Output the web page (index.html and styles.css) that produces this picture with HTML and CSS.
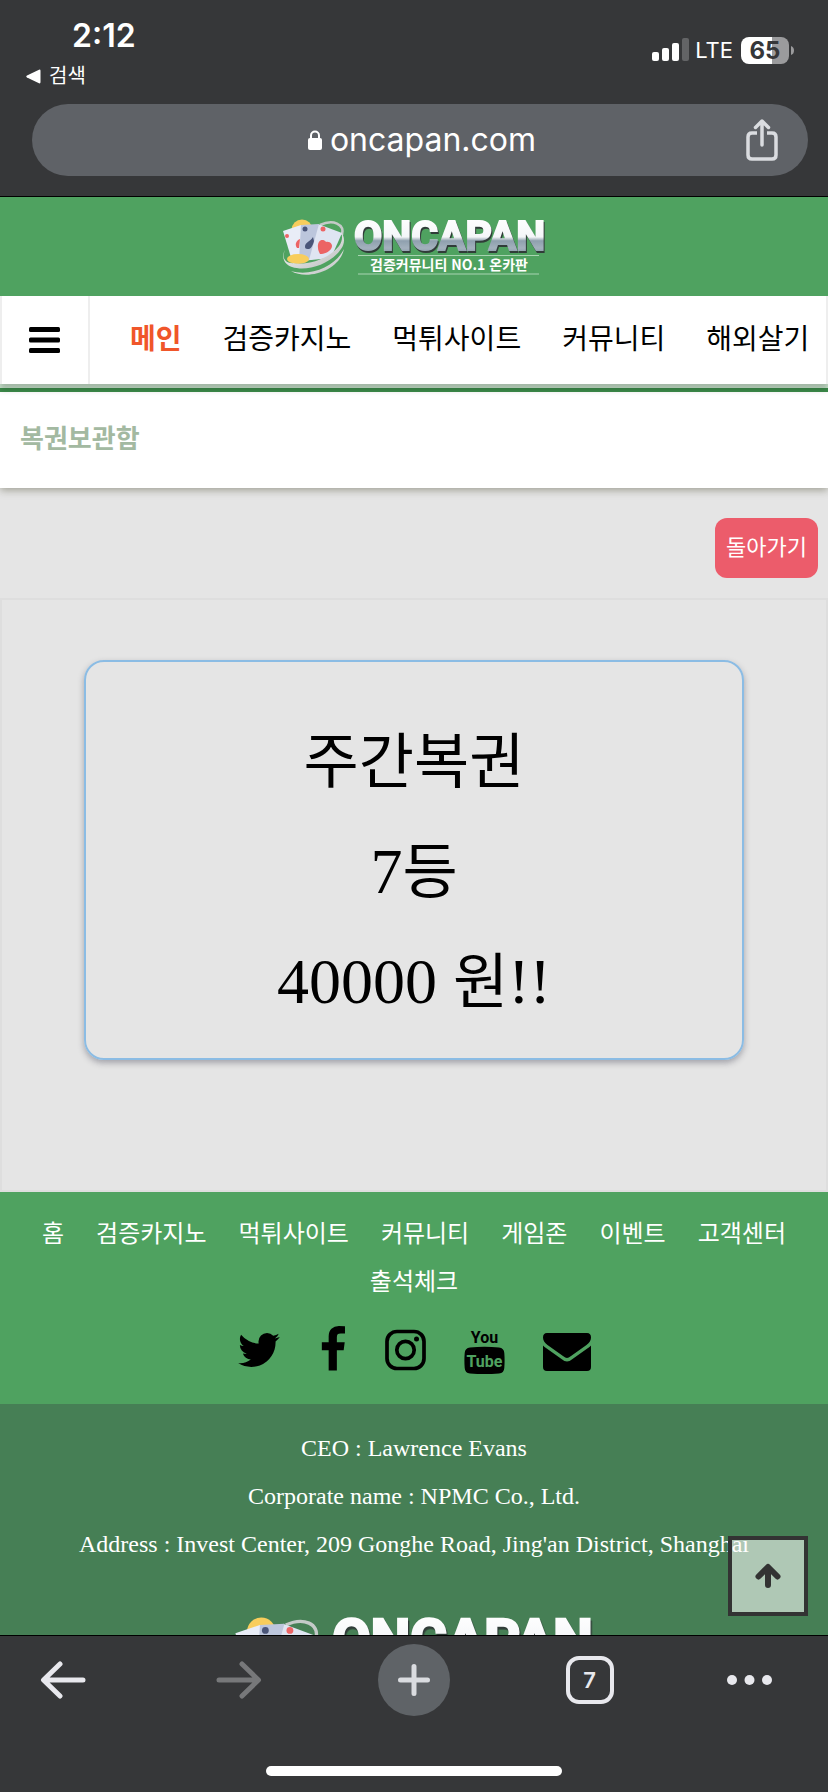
FILE: index.html
```html
<!DOCTYPE html>
<html lang="ko">
    <head>
        <meta charset="UTF-8">
        <meta name="viewport" content="width=device-width, initial-scale=1">
        <title>복권보관함</title>
        <link rel="stylesheet" href="styles.css">
    </head>
    <body>
        <svg class="symbols" aria-hidden="true">
            <defs>
                <linearGradient id="metal" x1="0" y1="0" x2="0" y2="1">
                    <stop offset="0.1" stop-color="#ffffff"/>
                    <stop offset="0.52" stop-color="#f4f6f8"/>
                    <stop offset="0.6" stop-color="#8fa0ae"/>
                    <stop offset="0.75" stop-color="#a3b1bd"/>
                    <stop offset="0.9" stop-color="#8494a5"/>
                </linearGradient>
                <linearGradient id="ring" x1="0" y1="0" x2="1" y2="1">
                    <stop offset="0" stop-color="#ffffff"/>
                    <stop offset="1" stop-color="#b9bcbc"/>
                </linearGradient>
            </defs>
            <symbol id="logo" viewBox="0 0 264 60">
                <circle cx="20" cy="13" r="10.5" fill="#f8cd5c"/>
                <path d="M38 8c13-6 25-1 22 10" fill="none" stroke="#c4cac8" stroke-width="2.5"/>
                <path d="M1 14l18-6 12 34-20 5z" fill="#e9edf7"/>
                <path d="M36 7l24 9-11 25-30 3z" fill="#dfe5f2"/>
                <path d="M19 8l18-1-10 36-10 1z" fill="#bcc6dc"/>
                <circle cx="5" cy="19" r="2" fill="#ec6464"/>
                <circle cx="23" cy="12" r="2.5" fill="#4a5578"/>
                <circle cx="41" cy="12" r="2.5" fill="#ec6464"/>
                <path d="M15 31c-3-4 0-8 3-9l-1 9z" fill="#ec6464"/>
                <path d="M23 30c0-5 5-5 8-10l1 4c-1 4-3 8-5 8s-4 0-4-2z" fill="#4a5578"/>
                <path d="M36 31c-1-8 5-10 8-6 4-1 8 3 5 7-2 3-7 5-11 5-1-2-2-4-2-6z" fill="#ec6464"/>
                <ellipse cx="16" cy="42" rx="11" ry="5" fill="#f8cd5c"/>
                <path d="M3 33c-3 7-1 12 6 13 16 3 38-4 48-17 3-4 4-9 2-14 4 5 4 11 0 17-10 15-34 23-49 18-8-3-11-10-7-17z" fill="url(#ring)"/>
                <path d="M9 54c20 6 45-5 53-22-4 21-36 32-53 22z" fill="url(#ring)"/>
                <text class="logo-name" x="72" y="33" fill="url(#metal)" stroke="url(#metal)">ONCAPAN</text>
                <path d="M76 38.5h181M76 57h181" stroke="#a9d4b2" stroke-width="1"/>
                <text class="logo-tagline" x="167" y="53">검증커뮤니티 NO.1 온카판</text>
            </symbol>
        </svg>

        <div class="browser">
            <div class="browser-top">
                <div class="status-bar">
                    <div class="status-left">
                        <span class="clock">2:12</span>
                        <a class="back-to-app" href="#">
                            <svg width="15" height="15" viewBox="0 0 15 15"><path d="M1 6.5L13 .7q1.500-.5 1.500 1v11.600q0 1.500-1.500 1L1 8.500q-1.500-1 0-2z" fill="#fff"/></svg>
                            검색
                        </a>
                    </div>
                    <div class="status-right">
                        <svg width="37" height="24" viewBox="0 0 37 24" fill="#fff">
                            <rect x="0" y="14" width="7" height="9" rx="2"/>
                            <rect x="10" y="10" width="7" height="13" rx="2"/>
                            <rect x="20" y="5" width="7" height="18" rx="2"/>
                            <rect x="30" y="0" width="7" height="23" rx="2" fill="#636466"/>
                        </svg>
                        <span class="network">LTE</span>
                        <span class="battery">65</span>
                        <svg class="battery-tip" width="3" height="9" viewBox="0 0 3 9"><path d="M0 0q3 1 3 4.500T0 9z" fill="#9b9b9d"/></svg>
                    </div>
                </div>
                <div class="address-bar">
                    <button class="address" type="button">
                        <svg width="14" height="20" viewBox="0 0 14 20"><path d="M3 9V5.500a4 4 0 0 1 8 0V9" fill="none" stroke="#fff" stroke-width="2"/><rect y="8" width="14" height="12" rx="2" fill="#fff"/></svg>
                        oncapan.com
                    </button>
                    <button class="share" type="button" aria-label="공유">
                        <svg width="32" height="42" viewBox="0 0 32 42" fill="none" stroke="#dadce0" stroke-width="3.500" stroke-linecap="round" stroke-linejoin="round">
                            <path d="M16 26V3M9.500 8.500L16 2l6.500 6.500"/>
                            <path d="M11 14H6q-4 0-4 4v18q0 4 4 4h20q4 0 4-4V18q0-4-4-4h-5" stroke-linecap="butt"/>
                        </svg>
                    </button>
                </div>
            </div>

            <div class="page">
                <header class="site-header">
                    <a href="#" aria-label="ONCAPAN"><svg class="header-logo"><use href="#logo"/></svg></a>
                </header>
                <div class="nav-wrap">
                    <nav class="main-nav">
                        <button class="menu-button" type="button" aria-label="메뉴">
                            <svg width="31" height="26" viewBox="0 0 31 26"><rect width="31" height="5" rx="1.500"/><rect y="10.500" width="31" height="5" rx="1.500"/><rect y="21" width="31" height="5" rx="1.500"/></svg>
                        </button>
                        <ul>
                            <li><a class="is-active" href="#">메인</a></li>
                            <li><a href="#">검증카지노</a></li>
                            <li><a href="#">먹튀사이트</a></li>
                            <li><a href="#">커뮤니티</a></li>
                            <li><a href="#">해외살기</a></li>
                        </ul>
                    </nav>
                </div>
                <h1 class="page-title">복권보관함</h1>

                <main>
                    <div class="toolbar">
                        <button class="return-button" type="button">돌아가기</button>
                    </div>
                    <div class="lottery-panel">
                        <div class="ticket">
                            <p><span>주간복권</span></p>
                            <p>7<span>등</span></p>
                            <p>40000 <span>원</span>!!</p>
                        </div>
                    </div>
                </main>

                <footer>
                    <div class="footer-top">
                        <ul class="footer-nav">
                            <li><a href="#">홈</a></li>
                            <li><a href="#">검증카지노</a></li>
                            <li><a href="#">먹튀사이트</a></li>
                            <li><a href="#">커뮤니티</a></li>
                            <li><a href="#">게임존</a></li>
                            <li><a href="#">이벤트</a></li>
                            <li><a href="#">고객센터</a></li>
                            <li><a href="#">출석체크</a></li>
                        </ul>
                        <div class="social">
                            <a href="#" aria-label="Twitter">
                                <svg width="44" height="48" viewBox="64 0 1664 1792"><path d="M1684 408q-67 98-162 167 1 14 1 42 0 130-38 259.500t-115.500 248.500-184.500 210.500-258 146-323 54.500q-271 0-496-145 35 4 78 4 225 0 401-138-105-2-188-64.500t-114-159.500q33 5 61 5 43 0 85-11-112-23-185.500-111.500t-73.500-205.500v-4q68 38 146 41-66-44-105-115t-39-154q0-88 44-163 121 149 294.500 238.500t371.500 99.500q-8-38-8-74 0-134 94.500-228.500t228.500-94.500q140 0 236 102 109-21 205-78-37 115-142 178 93-10 186-50z"/></svg>
                            </a>
                            <a href="#" aria-label="Facebook">
                                <svg width="28" height="48" viewBox="384 0 1024 1792"><path d="M1343 12v264h-157q-86 0-116 36t-30 108v189h293l-39 296h-254v759h-306v-759h-255v-296h255v-218q0-186 104-288.500t277-102.500q147 0 228 12z"/></svg>
                            </a>
                            <a href="#" aria-label="Instagram">
                                <svg width="41" height="48" viewBox="0 0 41 48"><rect x="2" y="5.500" width="37" height="37" rx="10" fill="none" stroke="#000" stroke-width="3.700"/><circle cx="20.500" cy="24" r="8.700" fill="none" stroke="#000" stroke-width="3.700"/><circle cx="31.500" cy="13" r="2.500"/></svg>
                            </a>
                            <a href="#" aria-label="YouTube">
                                <svg class="youtube" width="41" height="48" viewBox="0 0 41 48"><text x="20.500" y="17">You</text><path d="M6 21.500q14.500-1.500 29 0 5 .5 5.300 5.500.6 7.500 0 15-.3 5-5.300 5.500-14.500 1-29 0-5-.5-5.300-5.500-.6-7.500 0-15 .3-5 5.300-5.500z"/><text x="20.500" y="41" fill="#4fa260">Tube</text></svg>
                            </a>
                            <a href="#" aria-label="E-mail">
                                <svg width="48" height="48" viewBox="0 0 48 48"><path d="M4 7h40q4 0 4 4.500 0 4-4.500 7.500L28 30q-2.500 2-4 2t-4-2L4.500 19Q0 15.500 0 11.500 0 7 4 7z"/><path d="M0 19.500q1 1.200 3 2.500l15.500 11q3 2.500 5.500 2.500t5.500-2.500L45 22q2-1.300 3-2.500V41q0 4-4 4H4q-4 0-4-4z"/></svg>
                            </a>
                        </div>
                    </div>
                    <div class="footer-bottom">
                        <p>CEO : Lawrence Evans</p>
                        <p>Corporate name : NPMC Co., Ltd.</p>
                        <p>Address : Invest Center, 209 Gonghe Road, Jing'an District, Shanghai</p>
                        <svg class="footer-logo"><use href="#logo"/></svg>
                    </div>
                </footer>

                <button class="scroll-top" type="button" aria-label="맨 위로">
                    <svg width="26" height="26" viewBox="0 0 26 26" fill="none" stroke="#333" stroke-width="6" stroke-linecap="round"><path d="M13 22V6M3.500 13.500L13 4l9.500 9.500" stroke-linejoin="round"/></svg>
                </button>
            </div>

            <div class="browser-bottom">
                <div class="browser-tools">
                    <button type="button" aria-label="뒤로">
                        <svg width="46" height="38" viewBox="0 0 46 38" fill="none" stroke="#e8e8ed" stroke-width="5" stroke-linecap="round" stroke-linejoin="round"><path d="M43 19H4M20 3L3.500 19 20 35"/></svg>
                    </button>
                    <button type="button" aria-label="앞으로" disabled>
                        <svg width="46" height="38" viewBox="0 0 46 38" fill="none" stroke="#77787a" stroke-width="5" stroke-linecap="round" stroke-linejoin="round"><path d="M3 19h39M26 3l16.500 16L26 35"/></svg>
                    </button>
                    <button class="new-tab" type="button" aria-label="새 탭">
                        <svg width="32" height="32" viewBox="0 0 32 32" fill="none" stroke="#dadce0" stroke-width="5" stroke-linecap="round"><path d="M16 2.500v27M2.500 16h27"/></svg>
                    </button>
                    <button type="button" aria-label="탭 7개">
                        <span class="tab-count">7</span>
                    </button>
                    <button class="more" type="button" aria-label="더보기">
                        <svg width="46" height="10" viewBox="0 0 46 10" fill="#e8e8ed"><circle cx="5" cy="5" r="5"/><circle cx="22.500" cy="5" r="5"/><circle cx="40" cy="5" r="5"/></svg>
                    </button>
                </div>
                <div class="home-indicator"></div>
            </div>
        </div>
    </body>
</html>
```

FILE: styles.css
```css
* {
    box-sizing: border-box;
    margin: 0;
    padding: 0;
}

body {
    font-family: "Liberation Serif", "Noto Sans CJK KR", serif;
    font-size: 24px;
    line-height: 48px;
    color: #000;
}

ul {
    list-style: none;
}

a {
    color: inherit;
    text-decoration: none;
}

button {
    border: 0;
    background: none;
    color: inherit;
    font: inherit;
}

svg {
    display: block;
}

.symbols {
    position: absolute;
    width: 0;
    height: 0;
}

.browser {
    display: flex;
    flex-direction: column;
    height: 100vh;
    background: #363739;
}

/* browser top */

.browser-top {
    padding: 16px 20px 20px 32px;
    border-bottom: 1px solid #000;
    color: #fff;
    font-family: Inter, "Noto Sans CJK KR", sans-serif;
}

.status-bar {
    display: flex;
    justify-content: space-between;
    height: 88px;
}

.status-left {
    display: flex;
    flex-direction: column;
}

.clock {
    padding-left: 40px;
    font-size: 32px;
    font-weight: 600;
    line-height: 40px;
}

.back-to-app {
    display: flex;
    align-items: center;
    gap: 8px;
    margin-left: -6px;
    font-size: 20px;
    line-height: 40px;
}

.status-right {
    display: flex;
    align-items: center;
    height: 68px;
    padding-right: 14px;
}

.network {
    margin: 0 8px 0 6px;
    font-size: 22px;
}

.battery {
    width: 48px;
    border-radius: 8px;
    background: linear-gradient(to right, #fff 65%, #9b9b9d 65%);
    color: #363739;
    font-size: 24px;
    font-weight: 700;
    line-height: 27px;
    text-align: center;
}

.battery-tip {
    margin-left: 2px;
}

.address-bar {
    display: flex;
    align-items: center;
    height: 72px;
    padding: 0 30px;
    border-radius: 36px;
    background: #5f6267;
}

.address {
    display: flex;
    flex: 1;
    align-items: center;
    justify-content: center;
    gap: 8px;
    padding-left: 36px;
    font-size: 32px;
}

/* site header */

.page {
    position: relative;
    flex: 1;
    min-height: 0;
    overflow: hidden;
    background: #e5e5e5;
}

.site-header {
    display: flex;
    justify-content: center;
    padding: 20px 0 19px;
    background: #4fa260;
}

.header-logo {
    width: 264px;
    height: 60px;
}

.logo-name {
    filter: drop-shadow(1px 2px 0 #303c38);
    font-family: Roboto, sans-serif;
    font-size: 41px;
    font-weight: 700;
    stroke-width: 2px;
}

.logo-tagline {
    fill: #fff;
    font-family: "Noto Sans CJK KR", sans-serif;
    font-size: 14px;
    font-weight: 700;
    text-anchor: middle;
}

/* the menu bar and its rule stay above the title's shadow */
.nav-wrap {
    position: relative;
    padding-bottom: 4px;
    border-bottom: 4px solid #3d8d4b;
    background: #cbe6cf;
}

.main-nav {
    display: flex;
    height: 88px;
    border: 2px solid #eee;
    border-width: 0 2px;
    background: #fff;
    box-shadow: 0 6px 6px rgba(0, 0, 0, 0.2);
    font-size: 28px;
}

.menu-button {
    display: flex;
    align-items: center;
    justify-content: center;
    width: 88px;
    padding-right: 2px;
    border-right: 2px solid #eee;
}

.main-nav ul {
    display: flex;
    align-items: center;
    gap: 41px;
    padding-left: 40px;
    white-space: nowrap;
}

.main-nav .is-active {
    color: #f0562a;
    font-weight: 700;
}

.page-title {
    padding: 24px 20px;
    background: #fff;
    box-shadow: 0 2px 8px rgba(50, 50, 20, 0.4);
    color: #a3b9a1;
    font-size: 26px;
    line-height: 48px;
}

/* lottery */

.toolbar {
    display: flex;
    justify-content: flex-end;
    padding: 30px 10px 20px;
}

.return-button {
    padding: 0 11px;
    border-radius: 12px;
    background: #ec5c6b;
    color: #fff;
    font-size: 22px;
    line-height: 60px;
}

.lottery-panel {
    padding: 60px 82px 130px;
    border: 2px solid #dedede;
}

.ticket {
    padding: 45px 0 21px;
    border: 2px solid #8bbce4;
    border-radius: 20px;
    box-shadow: 0 3px 6px rgba(40, 40, 60, 0.35);
    font-size: 64px;
    line-height: 110px;
    text-align: center;
}

.ticket span {
    font-size: 60px;
    line-height: 60px;
}

/* footer */

footer {
    color: #fff;
    text-align: center;
}

.footer-top {
    padding: 18px 20px 30px;
    background: #4fa260;
}

.footer-nav {
    display: flex;
    flex-wrap: wrap;
    justify-content: center;
    column-gap: 32px;
}

.social {
    display: flex;
    justify-content: center;
    gap: 38px;
    margin-top: 20px;
}

.youtube {
    font-family: Roboto, sans-serif;
    font-size: 16px;
    font-weight: 700;
    text-anchor: middle;
}

.footer-bottom {
    padding-top: 20px;
    background: #467f55;
}

.footer-logo {
    width: 360px;
    height: 82px;
    margin: 46px auto 20px;
}

.scroll-top {
    position: absolute;
    right: 20px;
    bottom: 19px;
    display: flex;
    align-items: center;
    justify-content: center;
    width: 80px;
    height: 80px;
    border: 4px solid #333;
    background: rgba(255, 255, 255, 0.57);
}

/* browser bottom */

.browser-bottom {
    padding: 8px 16px 16px;
    border-top: 1px solid #000;
    font-family: Inter, sans-serif;
}

.browser-tools {
    display: flex;
    justify-content: space-between;
}

.browser-tools button {
    display: flex;
    align-items: center;
    justify-content: center;
    width: 94px;
    height: 72px;
}

.browser-tools .new-tab {
    width: 72px;
    margin: 0 11px;
    border-radius: 36px;
    background: #5f6367;
}

.browser-tools .more {
    padding-right: 30px;
}

.tab-count {
    width: 48px;
    border: 4px solid #e8e8ed;
    border-radius: 13px;
    color: #e8e8ed;
    font-size: 22px;
    font-weight: 600;
    line-height: 40px;
}

.home-indicator {
    width: 296px;
    height: 10px;
    margin: 50px auto 0;
    border-radius: 5px;
    background: #fff;
}
```
